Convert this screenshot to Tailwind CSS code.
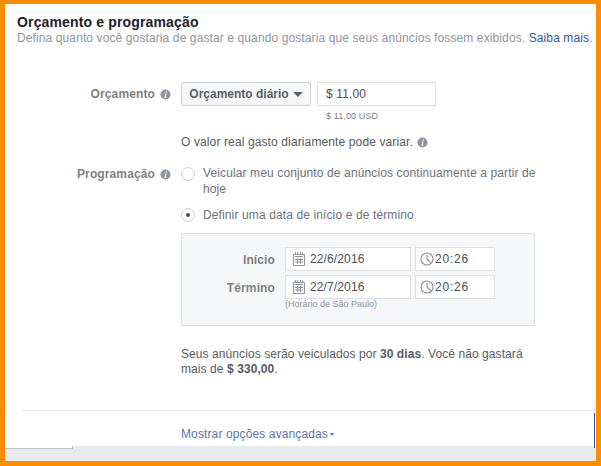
<!DOCTYPE html>
<html lang="en">
<head>
<meta charset="UTF-8">
<title>Orçamento e programação</title>
<script src="https://cdn.jsdelivr.net/npm/@tailwindcss/browser@4"></script>
</head>
<body class="w-[601px] h-[466px] overflow-hidden bg-[#ff8c00] font-['Liberation_Sans',Arial,sans-serif] text-[12px] leading-[16px] tracking-[0.12px] text-[#4b4f56]">
<svg class="hidden"><symbol id="info" viewBox="0 0 12 12"><circle cx="6" cy="6" r="5.5" fill="#8d949e"/><path d="M6.6 2.4h1.2l-.3 1.3H6.3zM5 5h2.2L6.4 8.7h.8l-.2.8H4.8l.8-3.7H4.8z" fill="#fff"/></symbol>
<symbol id="cal" viewBox="0 0 12 14"><path d="M.5 2.5h11v11H.5zM2 4.5h8M4.5 6v6M7.5 6v6M2 7.5h8M2 10h8" fill="none" stroke="#90949c"/><path d="M2.5 0v3M4.5 0v3M7.5 0v3M9.5 0v3" stroke="#90949c"/></symbol>
<symbol id="clock" viewBox="0 0 14 14"><circle cx="7" cy="7" r="6" fill="none" stroke="#90949c" stroke-width="1.2"/><path d="M7 3v4l3.5 3.5" fill="none" stroke="#90949c" stroke-width="1.2"/></symbol></svg>

<main class="relative mt-[4px] ml-[5px] w-[591px] h-[457px] bg-white flex flex-col">
  <div class="pl-[12px] pt-[10px]">
    <h1 class="text-[14px] leading-[16px] font-bold text-[#1d2129] tracking-[0.15px]">Orçamento e programação</h1>
    <p class="text-[12px] leading-[16px] tracking-[0.11px] text-[#90949c] whitespace-nowrap">Defina quanto você gostaria de gastar e quando gostaria que seus anúncios fossem exibidos. <a class="text-[#365899]">Saiba mais</a>.</p>
  </div>

  <div class="flex mt-[36px]">
    <div class="w-[176px] pr-[10px] h-[24px] flex justify-end items-center gap-[5px] font-bold text-[#7f7f7f]">Orçamento <svg class="w-[11px] h-[11px]"><use href="#info"/></svg></div>
    <div class="flex flex-col">
      <div class="flex gap-[6px]">
        <button class="w-[130px] h-[24px] flex items-center justify-center gap-[4px] bg-[#f6f7f9] border border-[#ced0d4] rounded-[2px] font-bold text-[#5a5e65] tracking-normal">Orçamento diário <span class="w-0 h-0 border-x-[5px] border-x-transparent border-t-[5px] border-t-[#606770]"></span></button>
        <div class="w-[119px] h-[24px] border border-[#dddfe2] pl-[8px] flex items-center text-[#4b4f56] text-[12px]">$ 11,00</div>
      </div>
      <div class="ml-[145px] mt-[4px] text-[9px] leading-[12px] text-[#7f7f7f]">$ 11,00 USD</div>
      <div class="mt-[12px] flex items-center gap-[4px] text-[#565a61]">O valor real gasto diariamente pode variar. <svg class="w-[11px] h-[11px]"><use href="#info"/></svg></div>
    </div>
  </div>

  <div class="flex mt-[15px]">
    <div class="w-[176px] pr-[10px] pt-[1px] h-[17px] flex justify-end items-center gap-[5px] font-bold text-[#7f7f7f]">Programação <svg class="w-[11px] h-[11px]"><use href="#info"/></svg></div>
    <div class="flex flex-col w-[354px]">
      <label class="flex gap-[8px]">
        <span class="w-[14px] h-[14px] mt-[2px] shrink-0 rounded-full border border-[#ced0d4] bg-[#fdfdfe]"></span>
        <span class="text-[#6d7178] whitespace-nowrap">Veicular meu conjunto de anúncios continuamente a partir de<br>hoje</span>
      </label>
      <label class="flex gap-[8px] mt-[10px]">
        <span class="w-[14px] h-[14px] mt-[1px] shrink-0 rounded-full border border-[#ced0d4] bg-[#fdfdfe] flex items-center justify-center"><span class="w-[4px] h-[4px] rounded-full bg-[#4b4f56]"></span></span>
        <span class="text-[#6d7178]">Definir uma data de início e de término</span>
      </label>
      <div class="mt-[10px] h-[93px] bg-[#f6f7f9] border border-[#dddfe2] pt-[13px]">
        <div class="flex items-center gap-[10px] h-[24px]">
          <span class="w-[93px] pt-[1px] text-right font-bold text-[#7f7f7f]">Início</span>
          <div class="w-[126px] h-[24px] bg-white border border-[#dddfe2] flex items-center pl-[7px] gap-[5px] text-[#4b4f56]"><svg class="w-[12px] h-[14px]"><use href="#cal"/></svg>22/6/2016</div>
          <div class="w-[80px] h-[24px] -ml-[6px] bg-white border border-[#dddfe2] flex items-center pl-[4px] gap-[1px] text-[#4b4f56]"><svg class="w-[14px] h-[14px]"><use href="#clock"/></svg><span class="tracking-[0.8px]">20:26</span></div>
        </div>
        <div class="flex items-center gap-[10px] h-[24px] mt-[4px]">
          <span class="w-[93px] pt-[1px] text-right font-bold text-[#7f7f7f]">Término</span>
          <div class="w-[126px] h-[24px] bg-white border border-[#dddfe2] flex items-center pl-[7px] gap-[5px] text-[#4b4f56]"><svg class="w-[12px] h-[14px]"><use href="#cal"/></svg>22/7/2016</div>
          <div class="w-[80px] h-[24px] -ml-[6px] bg-white border border-[#dddfe2] flex items-center pl-[4px] gap-[1px] text-[#4b4f56]"><svg class="w-[14px] h-[14px]"><use href="#clock"/></svg><span class="tracking-[0.8px]">20:26</span></div>
        </div>
        <div class="ml-[103px] text-[9px] leading-[11px] tracking-normal text-[#90949c]">(Horário de São Paulo)</div>
      </div>
      <p class="mt-[21px] leading-[15px] tracking-[0.08px] text-[#565a61]">Seus anúncios serão veiculados por <b>30 dias</b>. Você não gastará mais de <b>$ 330,00</b>.</p>
    </div>
  </div>

  <div class="mt-[33px] ml-[16px] mr-[2px] border-t border-[#e9eaed]"></div>
  <div class="pl-[176px] pt-[15px] flex items-center gap-[2px] text-[#5b74a8]">Mostrar opções avançadas <span class="w-0 h-0 border-x-[2.5px] border-x-transparent border-t-[3px] border-t-[#5b74a8]"></span></div>

  <footer class="absolute left-0 right-0 bottom-0 h-[15px] bg-[#e9eaed]"></footer>
  <div class="absolute left-0 bottom-[12px] w-[68px] h-[3px] bg-white border-b border-r border-[#bdbfc3]"></div>
  <div class="absolute right-[1px] top-[409px] w-[1px] h-[35px] bg-[#3b5998]"></div>
  <div class="absolute right-[1px] top-[397px] w-[1px] h-[12px] bg-[#e9eaed]"></div>
  <div class="absolute left-0 top-[397px] w-[2px] h-[10px] bg-[#f4f4f5]"></div>
</main>
</body>
</html>
